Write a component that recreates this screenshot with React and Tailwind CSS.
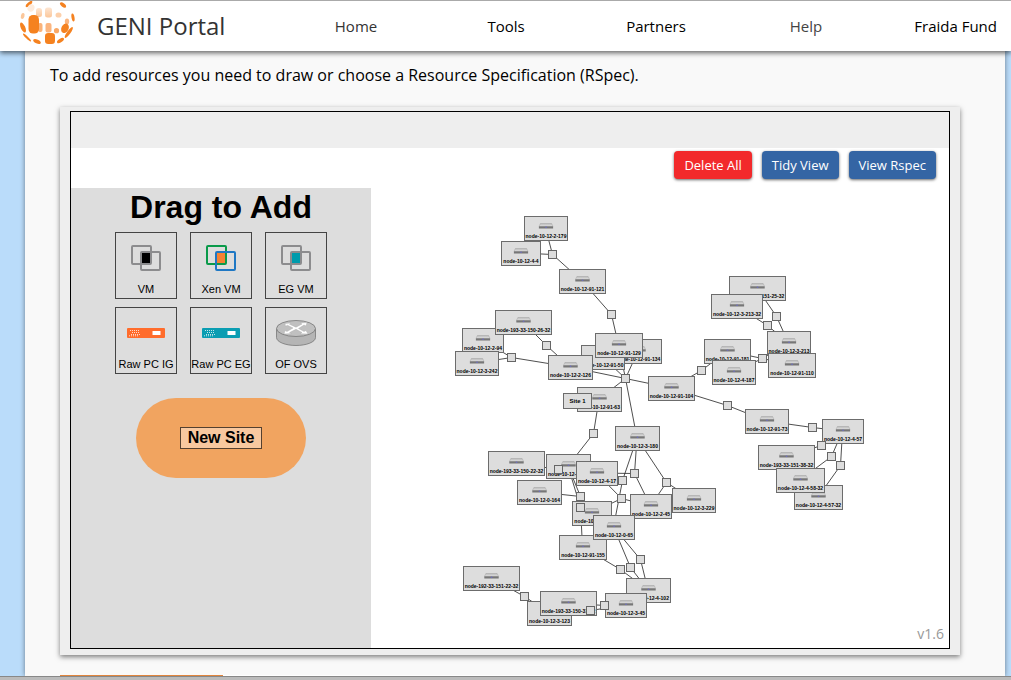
const NODES = [
  ["node-10-12-2-179", 524, 216, 43], ["node-10-12-4-4", 501, 241, 39],
  ["node-10-12-91-121", 559, 269, 46], ["node-10-12-2-94", 462, 328, 41],
  ["node-193-33-150-26-32", 495, 310, 56], ["node-10-12-3-242", 455, 351, 43],
  ["node-10-12-91-134", 615, 339, 46], ["node-10-12-91-50", 581, 345, 43],
  ["node-10-12-2-126", 548, 355, 44], ["node-10-12-91-129", 595, 333, 47],
  ["node-10-12-91-104", 648, 376, 46], ["node-10-12-91-63", 577, 387, 44],
  ["node-193-33-151-25-32", 729, 276, 56], ["node-10-12-3-213-32", 711, 294, 51],
  ["node-10-12-3-213", 767, 331, 43], ["node-10-12-91-110", 768, 353, 47],
  ["node-10-12-91-181", 704, 339, 46], ["node-10-12-4-187", 712, 360, 43],
  ["node-10-12-91-73", 745, 409, 43], ["node-10-12-4-57", 822, 419, 41],
  ["node-193-33-151-38-32", 758, 445, 56], ["node-10-12-4-57-32", 794, 485, 48],
  ["node-10-12-4-58-32", 776, 468, 48], ["node-10-12-3-229", 672, 488, 43],
  ["node-10-12-2-45", 630, 494, 41], ["node-10-12-3-180", 615, 426, 44],
  ["node-193-33-150-22-32", 488, 451, 56], ["node-10-12-2-106", 546, 454, 44],
  ["node-10-12-4-17", 576, 461, 41], ["node-10-12-0-164", 517, 480, 44],
  ["node-10-12-3-4", 572, 501, 39], ["node-10-12-91-155", 559, 535, 47],
  ["node-10-12-0-65", 593, 515, 41], ["node-10-12-4-102", 626, 578, 44],
  ["node-10-12-3-45", 605, 593, 41], ["node-192-33-151-22-32", 463, 566, 56],
  ["node-10-12-3-123", 527, 601, 44], ["node-193-33-150-31-32", 540, 591, 56],
];

// Each junction: centre x, centre y, indexes of the nodes it joins
const JUNCTIONS = [
  [552, 254, [0, 1, 2]], [611, 314, [2, 9]], [546, 345, [4, 8]],
  [511, 357, [3, 5, 8]], [625, 378, [6, 7, 8, 9, 10, 11, 25]],
  [776, 316, [12, 14]], [767, 325, [13, 14]], [762, 358, [14, 15, 16, 17]],
  [701, 370, [10, 16]], [727, 405, [10, 18]], [812, 427, [18, 19]],
  [821, 445, [19, 20]], [831, 456, [19, 22]], [840, 465, [19, 21]],
  [593, 433, [11, 27]], [558, 469, [26, 27]], [634, 473, [25, 28, 24]],
  [666, 482, [25, 24, 23]], [622, 480, [25, 32]], [621, 498, [28, 24, 30]],
  [580, 496, [27, 29, 30]], [580, 507, [27, 31]], [620, 569, [31, 33]],
  [630, 567, [32, 33]], [640, 559, [32, 33]], [524, 596, [35, 36]],
  [590, 610, [36, 34]], [604, 605, [37, 34]],
];

const FONT = "font-['Liberation_Sans',Arial,sans-serif]";

function Logo() {
  return (
    <svg width="56" height="50" viewBox="0 0 56 50" className="shrink-0" fill="#f58220" aria-label="GENI">
      <defs>
        <linearGradient id="fade" x1="0" y1="0" x2="0" y2="1">
          <stop offset="0" stopColor="#fde6d3" />
          <stop offset="1" stopColor="#fbc79b" />
        </linearGradient>
      </defs>
      <ellipse cx="9" cy="3" rx="4.2" ry="1.6" transform="rotate(-42 9 3)" />
      <ellipse cx="43" cy="4" rx="3.6" ry="1.8" transform="rotate(38 43 4)" />
      <ellipse cx="11" cy="7" rx="3.4" ry="3.8" fill="#fdebdc" transform="rotate(25 11 7)" />
      <rect x="16" y="7" width="6" height="9" rx="2.5" fill="url(#fade)" />
      <rect x="25" y="6.5" width="7" height="10" rx="2.5" fill="url(#fade)" />
      <ellipse cx="38.5" cy="14" rx="3" ry="2.6" fill="#fcd0ab" />
      <ellipse cx="2.7" cy="15" rx="1.8" ry="3" fill="#fbc79b" transform="rotate(15 2.7 15)" />
      <ellipse cx="53" cy="16.5" rx="1.5" ry="4" transform="rotate(-10 53 16.5)" />
      <ellipse cx="47" cy="20.5" rx="2.2" ry="3" fill="#fbb57f" />
      <rect x="18" y="22" width="4.5" height="9" rx="2" fill="#fab37a" />
      <rect x="8.5" y="14" width="10.5" height="18.5" rx="4.5" />
      <rect x="25.5" y="22" width="6" height="9.5" rx="2" fill="#fbb57f" />
      <ellipse cx="36.5" cy="29.7" rx="2.6" ry="2.6" fill="#f9a866" />
      <ellipse cx="45" cy="27.3" rx="3.6" ry="5" transform="rotate(25 45 27.3)" />
      <ellipse cx="3" cy="26.5" rx="2.2" ry="5.4" transform="rotate(-24 3 26.5)" />
      <ellipse cx="48.8" cy="31.5" rx="1.7" ry="6.6" transform="rotate(36 48.8 31.5)" />
      <ellipse cx="7" cy="36.5" rx="1.1" ry="5.5" transform="rotate(-46 7 36.5)" />
      <rect x="25" y="32" width="10" height="11" rx="3.2" />
      <ellipse cx="17" cy="40.5" rx="4" ry="2" transform="rotate(24 17 40.5)" />
      <ellipse cx="40.5" cy="39.5" rx="4" ry="1.8" transform="rotate(-34 40.5 39.5)" />
    </svg>
  );
}

function VmIcon({ back, front, core }) {
  return (
    <svg width="32" height="28" viewBox="0 0 32 28" fill="none" strokeWidth="2">
      <rect x="2" y="2" width="19" height="18" rx="1" stroke={back} />
      <rect x="11" y="8" width="19" height="18" rx="1" stroke={front} />
      <rect x="12" y="9" width="8" height="10" fill={core} />
    </svg>
  );
}

function RawPcIcon({ color }) {
  return (
    <svg width="38" height="28" viewBox="0 0 38 28">
      <rect y="9" width="38" height="10" rx="1" fill={color} />
      <g stroke="#fff" strokeDasharray="1 1" opacity="0.75">
        <path d="M3 11.5h9M5 13.5h8M4 15.5h9M2 16.8h9" />
      </g>
      <rect x="25.5" y="12" width="8" height="4" fill="#fff" />
    </svg>
  );
}

function SwitchIcon() {
  return (
    <svg width="40" height="28" viewBox="0 0 40 28" stroke="#777" strokeWidth="0.8">
      <path d="M.5 10v8.500c0 4.500 9 8 19.500 8s19.500-3.500 19.500-8V10z" fill="#b5b5b5" />
      <ellipse cx="20" cy="9.500" rx="19.500" ry="8" fill="#c0c0c0" />
      <path
        d="M9 4.500l6-.5-1.500 1.200 6.500 3L26 5l-2-1 7-.5-1 3.500-2-1-5.500 3.500 5.500 3 2-1 2 3.500-8-.3 2-1.200-6-3.200-6.500 3.300 2 1-7.500.4 1-3.500 2 1 6-3.500-5.500-2.700-2 1z"
        fill="#fff" stroke="#aaa" strokeWidth="0.4"
      />
    </svg>
  );
}

const TILES = [
  ["VM", <VmIcon back="#8c8c8e" front="#8c8c8e" core="#000" />],
  ["Xen VM", <VmIcon back="#0a9a4a" front="#1f78c4" core="#f58233" />],
  ["EG VM", <VmIcon back="#8c8c8e" front="#8c8c8e" core="#009bac" />],
  ["Raw PC IG", <RawPcIcon color="#ff6c2c" />],
  ["Raw PC EG", <RawPcIcon color="#0a9db2" />],
  ["OF OVS", <SwitchIcon />],
];

function Topology() {
  return (
    <svg viewBox="371 188 578 460" className={`block h-auto w-full ${FONT}`} textAnchor="middle" fontWeight="bold">
      <defs>
        <linearGradient id="lid" x1="0" y1="0" x2="0" y2="1">
          <stop offset="0" stopColor="#b0b0b0" />
          <stop offset="1" stopColor="#e8e8e8" />
        </linearGradient>
        <symbol id="host" viewBox="0 0 15 6">
          <path d="M2 0.300h11l1.500 3h-14z" fill="url(#lid)" stroke="#aaa" strokeWidth="0.5" />
          <rect x="0.300" y="3.300" width="14.400" height="2.200" fill="#777" />
          <rect x="6.800" y="3.700" width="1.500" height="1" fill="#6c6cd8" />
        </symbol>
      </defs>
      <g stroke="#222" strokeWidth="0.8">
        {JUNCTIONS.map(([x, y, ends]) =>
          ends.map((n) => (
            <line key={`${x}-${y}-${n}`} x1={x + 0.5} y1={y + 0.5} x2={NODES[n][1] + NODES[n][3] / 2} y2={NODES[n][2] + 12} />
          ))
        )}
      </g>
      {NODES.map(([name, x, y, w]) => (
        <g key={name}>
          <rect x={x + 0.5} y={y + 0.5} width={w} height="24" fill="#ddd" stroke="#6c6c6c" />
          <use href="#host" x={x + w / 2 - 7} y={y + 7} width="15" height="6" />
          <text x={x + w / 2 + 0.5} y={y + 22} fontSize="5">{name}</text>
        </g>
      ))}
      <rect x="563.500" y="393.500" width="28" height="15" fill="#ddd" stroke="#6c6c6c" />
      <text x="577.500" y="403" fontSize="6">Site 1</text>
      {JUNCTIONS.map(([x, y]) => (
        <rect key={`${x}-${y}`} x={x - 3.5} y={y - 3.5} width="8" height="8" fill="#ddd" stroke="#666" />
      ))}
    </svg>
  );
}

export default function App() {
  return (
    <div className="flex h-screen flex-col overflow-hidden bg-[#badcfa] font-['Open_Sans',sans-serif] text-black">
      <header className="relative z-10 flex h-[51px] shrink-0 items-center border-t border-[#aaa] bg-white pl-5 shadow-[0_2px_5px_rgba(0,0,0,0.6)]">
        <Logo />
        <h1 className="ml-[21px] flex-1 text-2xl text-[#333]">GENI Portal</h1>
        <nav className="flex text-center text-[15px]">
          <a href="#home" className="w-[150px] text-[#333]">Home</a>
          <a href="#tools" className="w-[150px]">Tools</a>
          <a href="#partners" className="w-[150px]">Partners</a>
          <a href="#help" className="w-[150px] text-[#444]">Help</a>
          <a href="#account" className="w-[130px] pr-[14px] text-right">Fraida Fund</a>
        </nav>
      </header>

      <main className="mr-[6px] ml-[25px] min-h-0 flex-1 overflow-hidden bg-[#f9f9f9] pt-3 pr-[45px] pl-[35px] shadow-[0_0_5px_rgba(0,0,0,0.45)]">
        <p className="-ml-[10px] text-base">
          To add resources you need to draw or choose a Resource Specification (RSpec).
        </p>

        <section className="mt-5 bg-[#eee] px-[10px] pt-1 pb-[6px] shadow-[0_2px_5px_rgba(0,0,0,0.5)]">
          <div className="border border-black bg-white">
            <div className="h-9 bg-[#eee]" />
            <div className="flex h-10 items-start justify-end gap-[10px] pt-[3px] pr-[13px] text-[13px] text-white">
              <button className="h-7 rounded bg-[#f2292b] px-[10px] pt-px shadow-[0_1px_3px_rgba(0,0,0,0.6)]">Delete All</button>
              <button className="h-7 rounded bg-[#3465a4] px-[10px] pt-px shadow-[0_1px_3px_rgba(0,0,0,0.6)]">Tidy View</button>
              <button className="h-7 rounded bg-[#3465a4] px-[10px] pt-px shadow-[0_1px_3px_rgba(0,0,0,0.6)]">View Rspec</button>
            </div>
            <div className="flex">
              <aside className={`flex w-[300px] shrink-0 flex-col items-center bg-[#ddd] ${FONT}`}>
                <h2 className="pt-[1px] text-[32px] leading-9 font-bold">Drag to Add</h2>
                <div className="mt-[7px] grid grid-cols-3 gap-x-[13px] gap-y-2">
                  {TILES.map(([label, icon]) => (
                    <button
                      key={label}
                      draggable
                      className="flex h-[67px] w-[62px] flex-col items-center border border-[#444] pt-[11px] text-[11px] leading-4 whitespace-nowrap"
                    >
                      {icon}
                      <span className="mt-[9px]">{label}</span>
                    </button>
                  ))}
                </div>
                <button draggable className="mt-6 flex h-20 w-[170px] items-center justify-center rounded-full bg-[#f1a460]">
                  <span className="h-[22px] w-[82px] border border-[#54402f] bg-[#f8c89f] text-base leading-5 font-bold">New Site</span>
                </button>
              </aside>
              <div className="relative min-w-0 flex-1">
                <Topology />
                <span className="absolute right-[5px] bottom-1 text-sm text-[#999]">v1.6</span>
              </div>
            </div>
          </div>
        </section>
        <div className="mt-5 h-2 bg-white">
          <div className="h-full w-[163px] bg-[#e0853d]" />
        </div>
      </main>
      <footer className="relative h-1 shrink-0 border-t border-[#888] bg-[#bbb]" />
    </div>
  );
}
